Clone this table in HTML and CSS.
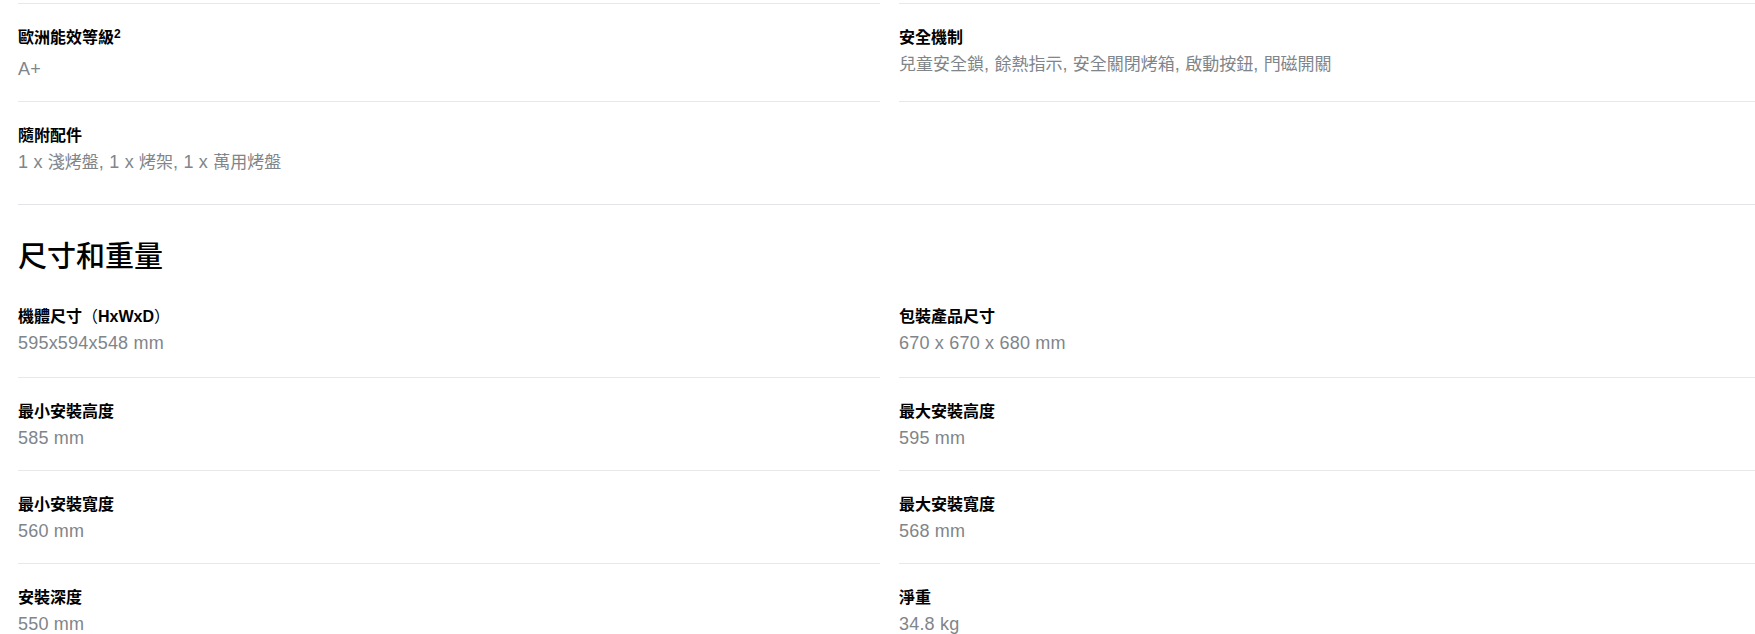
FILE: index.html
```html
<!DOCTYPE html>
<html lang="zh-Hant">
<head>
<meta charset="utf-8">
<title>產品規格</title>
<link rel="stylesheet" href="styles.css">
</head>
<body>
<main class="specs">
  <section class="spec-section spec-section--top">
    <div class="spec-grid">
      <div class="spec">
        <h3 class="spec-title spec-title--note">歐洲能效等級<sup class="note">2</sup></h3>
        <p class="spec-value">A+</p>
      </div>
      <div class="spec">
        <h3 class="spec-title">安全機制</h3>
        <p class="spec-value"><span class="cjk">兒童安全鎖</span>, <span class="cjk">餘熱指示</span>, <span class="cjk">安全關閉烤箱</span>, <span class="cjk">啟動按鈕</span>, <span class="cjk">門磁開關</span></p>
      </div>
      <div class="spec">
        <h3 class="spec-title">隨附配件</h3>
        <p class="spec-value">1 x <span class="cjk">淺烤盤</span>, 1 x <span class="cjk">烤架</span>, 1 x <span class="cjk">萬用烤盤</span></p>
      </div>
      <div class="spec spec--empty"></div>
    </div>
  </section>

  <section class="spec-section">
    <h2 class="section-heading">尺寸和重量</h2>
    <div class="spec-grid spec-grid--flush">
      <div class="spec">
        <h3 class="spec-title">機體尺寸<span class="fw">（</span><b class="latin">HxWxD</b><span class="fw">）</span></h3>
        <p class="spec-value">595x594x548 mm</p>
      </div>
      <div class="spec">
        <h3 class="spec-title">包裝產品尺寸</h3>
        <p class="spec-value">670 x 670 x 680 mm</p>
      </div>
      <div class="spec">
        <h3 class="spec-title">最小安裝高度</h3>
        <p class="spec-value">585 mm</p>
      </div>
      <div class="spec">
        <h3 class="spec-title">最大安裝高度</h3>
        <p class="spec-value">595 mm</p>
      </div>
      <div class="spec">
        <h3 class="spec-title">最小安裝寬度</h3>
        <p class="spec-value">560 mm</p>
      </div>
      <div class="spec">
        <h3 class="spec-title">最大安裝寬度</h3>
        <p class="spec-value">568 mm</p>
      </div>
      <div class="spec">
        <h3 class="spec-title">安裝深度</h3>
        <p class="spec-value">550 mm</p>
      </div>
      <div class="spec">
        <h3 class="spec-title">淨重</h3>
        <p class="spec-value">34.8 kg</p>
      </div>
    </div>
  </section>
</main>
</body>
</html>
```

FILE: styles.css
```css
html, body {
  margin: 0;
  padding: 0;
  background: #ffffff;
}

body {
  font-family: "Liberation Sans", "Noto Sans CJK TC", Arial, sans-serif;
  color: #000000;
  overflow: hidden;
  text-spacing-trim: space-all;
}

.specs {
  padding: 3px 0 0 18px;
}

.spec-section {
  border-bottom: 1px solid #e3e5e8;
}

.spec-section--top {
  padding-bottom: 10px;
}

.spec-grid {
  display: grid;
  grid-template-columns: 862px 862px;
  column-gap: 19px;
}

.spec {
  border-top: 1px solid #e6e8ea;
  padding: 20px 0;
  min-width: 0;
}

.spec-grid--flush .spec:nth-child(-n+2) {
  border-top-color: transparent;
  padding-top: 18px;
  padding-bottom: 22px;
}

.spec-title {
  margin: 0 0 4px;
  font-family: "Noto Sans CJK TC", "Liberation Sans", sans-serif;
  font-size: 16px;
  line-height: 24px;
  font-weight: 700;
  color: #000000;
  white-space: nowrap;
}

.spec-title--note {
  margin-bottom: 9px;
}

.note {
  font-family: "Liberation Sans", Arial, sans-serif;
  font-size: 12px;
  line-height: 0;
  vertical-align: 5px;
  font-weight: 700;
}

.fw {
  font-family: "Noto Sans CJK TC", sans-serif;
  font-weight: 400;
}

.latin {
  font-family: "Liberation Sans", Arial, sans-serif;
  font-weight: 700;
  line-height: 1;
}

.spec-value {
  margin: 0;
  font-size: 18px;
  line-height: 24px;
  letter-spacing: 0.2px;
  font-weight: 400;
  color: #80858a;
  white-space: nowrap;
}

.cjk {
  font-family: "Noto Sans CJK TC", sans-serif;
  font-size: 17px;
  line-height: 1;
  letter-spacing: 0;
}

.section-heading {
  margin: 0;
  padding: 31px 0 12px;
  font-family: "Noto Sans CJK TC", sans-serif;
  font-size: 29px;
  line-height: 36px;
  font-weight: 500;
  color: #000000;
}
```
